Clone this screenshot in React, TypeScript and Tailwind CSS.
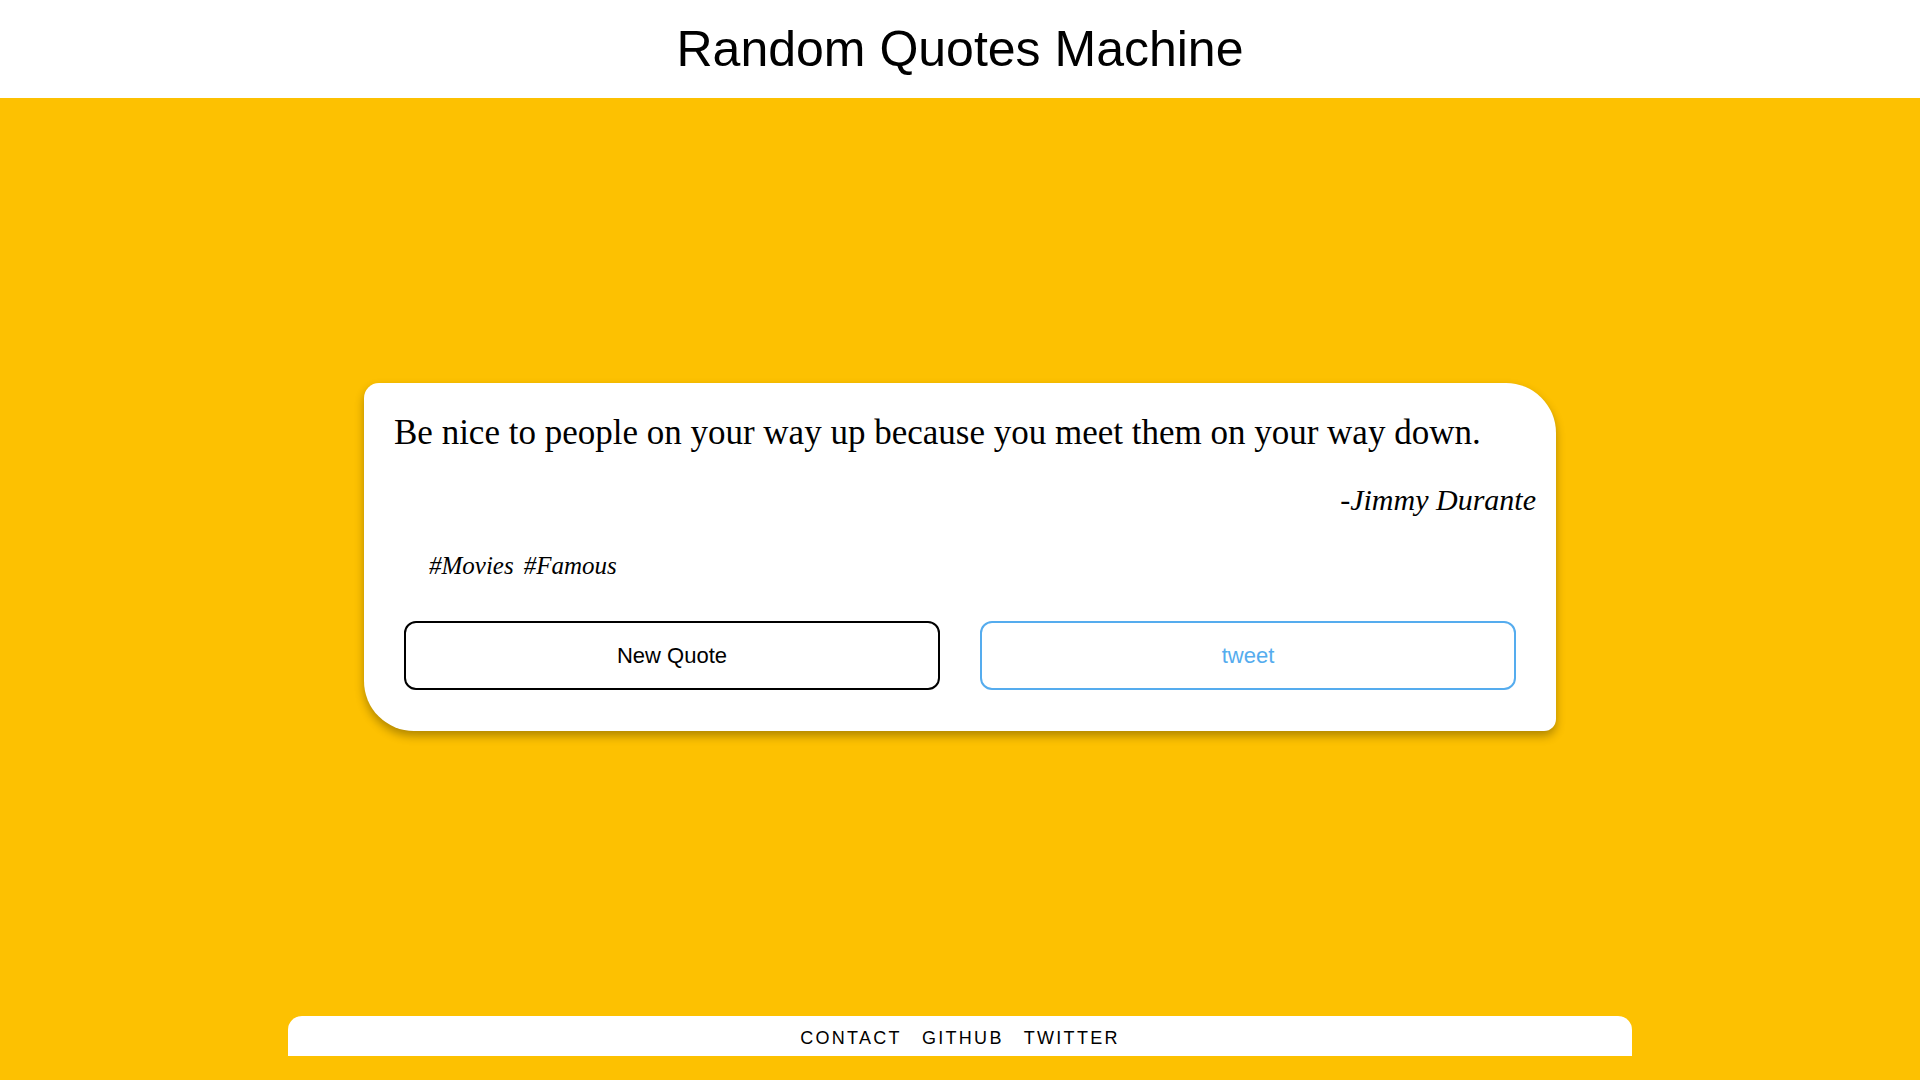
export default function App() {
  const tags = ["#Movies", "#Famous"];

  return (
    <div className="min-h-screen flex flex-col bg-[#fdc101]">
      {/* header */}
      <header className="h-[98px] bg-white flex items-center justify-center">
        <h1 className="font-['Liberation_Sans',Arial,sans-serif] text-[50px] leading-none text-black">
          Random Quotes Machine
        </h1>
      </header>

      <main className="flex-1 flex items-center justify-center">
        <div className="w-[1192px] bg-white rounded-tl-[15px] rounded-tr-[50px] rounded-bl-[50px] rounded-br-[12px] shadow-[0_5px_10px_rgba(0,0,0,0.3)] pt-[30px] pb-[41px] font-['Liberation_Serif','Times_New_Roman',serif]">
          <p className="px-[30px] text-[35px] leading-[39px] text-black">
            Be nice to people on your way up because you meet them on your way down.
          </p>
          <p className="mt-[31px] pr-[20px] text-right italic text-[30px] leading-[33px] text-black">
            -Jimmy Durante
          </p>
          <div className="mt-[36px] pl-[65px] flex gap-[10px] italic text-[25px] leading-[28px] text-black">
            {tags.map((t) => (
              <span key={t}>{t}</span>
            ))}
          </div>
          <div className="mt-[41px] px-[40px] flex gap-[40px] font-['Liberation_Sans',Arial,sans-serif]">
            <button className="flex-1 h-[69px] border-2 border-black rounded-[12px] bg-white text-[22px] text-black">
              New Quote
            </button>
            <button className="flex-1 h-[69px] border-2 border-[#55acee] rounded-[12px] bg-white text-[22px] text-[#55acee]">
              tweet
            </button>
          </div>
        </div>
      </main>

      {/* footer */}
      <footer className="w-[1344px] mx-auto mb-[24px] h-[40px] bg-white rounded-t-[14px] flex items-center justify-center gap-[20px] pt-[5px] font-['Liberation_Sans',Arial,sans-serif] text-[18px] tracking-[2.3px] text-black">
        <a href="#">CONTACT</a>
        <a href="#">GITHUB</a>
        <a href="#">TWITTER</a>
      </footer>
    </div>
  );
}
